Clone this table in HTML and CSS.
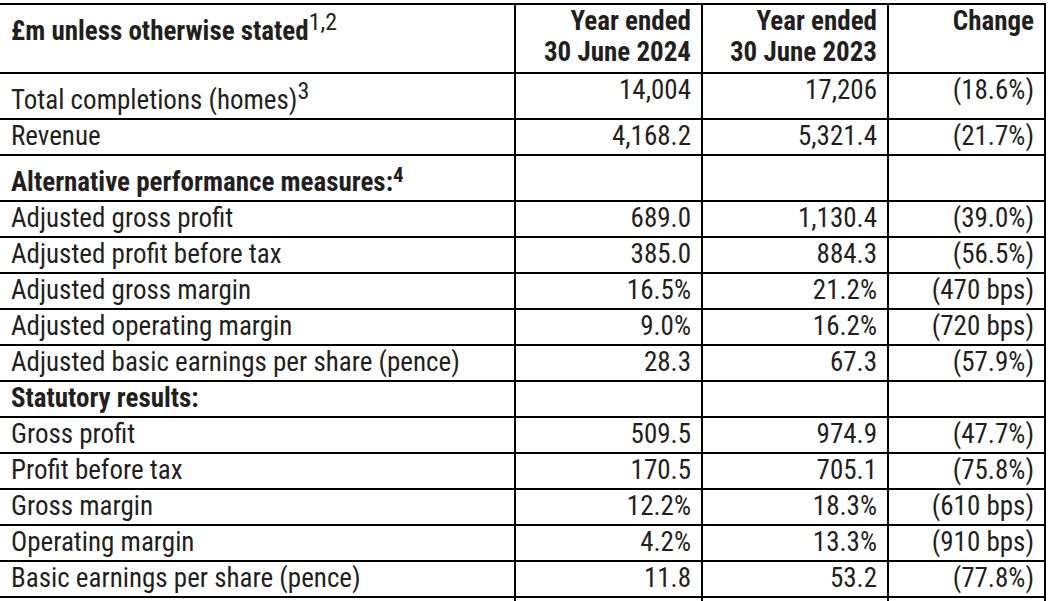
FILE: index.html
```html
<!DOCTYPE html>
<html lang="en">
<head>
<meta charset="utf-8">
<title>Results summary</title>
<link rel="stylesheet" href="styles.css">
</head>
<body>
<table class="results">
  <colgroup>
    <col class="c-label">
    <col class="c-cur">
    <col class="c-prev">
    <col class="c-chg">
  </colgroup>
  <thead>
    <tr class="head">
      <th class="label">£m unless otherwise stated<sup class="note">1,2</sup></th>
      <th>Year ended<br>30 June 2024</th>
      <th>Year ended<br>30 June 2023</th>
      <th>Change</th>
    </tr>
  </thead>
  <tbody>
    <tr><td class="label">Total completions (homes)<sup class="note">3</sup></td><td>14,004</td><td>17,206</td><td>(18.6%)</td></tr>
    <tr><td class="label">Revenue</td><td>4,168.2</td><td>5,321.4</td><td>(21.7%)</td></tr>
    <tr class="section"><td class="label">Alternative performance measures:<sup class="note note-small">4</sup></td><td></td><td></td><td></td></tr>
    <tr><td class="label">Adjusted gross profit</td><td>689.0</td><td>1,130.4</td><td>(39.0%)</td></tr>
    <tr><td class="label">Adjusted profit before tax</td><td>385.0</td><td>884.3</td><td>(56.5%)</td></tr>
    <tr><td class="label">Adjusted gross margin</td><td>16.5%</td><td>21.2%</td><td>(470 bps)</td></tr>
    <tr><td class="label">Adjusted operating margin</td><td>9.0%</td><td>16.2%</td><td>(720 bps)</td></tr>
    <tr><td class="label">Adjusted basic earnings per share (pence)</td><td>28.3</td><td>67.3</td><td>(57.9%)</td></tr>
    <tr class="section"><td class="label">Statutory results:</td><td></td><td></td><td></td></tr>
    <tr><td class="label">Gross profit</td><td>509.5</td><td>974.9</td><td>(47.7%)</td></tr>
    <tr><td class="label">Profit before tax</td><td>170.5</td><td>705.1</td><td>(75.8%)</td></tr>
    <tr><td class="label">Gross margin</td><td>12.2%</td><td>18.3%</td><td>(610 bps)</td></tr>
    <tr><td class="label">Operating margin</td><td>4.2%</td><td>13.3%</td><td>(910 bps)</td></tr>
    <tr><td class="label">Basic earnings per share (pence)</td><td>11.8</td><td>53.2</td><td>(77.8%)</td></tr>
    <tr class="more"><td class="label"></td><td></td><td></td><td></td></tr>
  </tbody>
</table>
</body>
</html>
```

FILE: styles.css
```css
html, body {
  margin: 0;
  padding: 0;
  height: 601px;
  overflow: hidden;
  background: #ffffff;
}

body {
  font-family: Roboto, "Liberation Sans", sans-serif;
  font-stretch: 80%;
  font-size: 27px;
  line-height: 31px;
  color: #231f20;
}

.results {
  border-collapse: separate;
  border-spacing: 0;
  table-layout: fixed;
  width: 1049px;
  margin: 3px 0 0 -3px;
  border-top: 2px solid #000;
  border-left: 2px solid #000;
}

.c-label { width: 517px; }
.c-cur { width: 187px; }
.c-prev { width: 186px; }
.c-chg { width: 157px; }

.results th,
.results td {
  padding: 1px 10px 2px 12px;
  border-right: 2px solid #000;
  border-bottom: 2px solid #000;
  vertical-align: top;
  text-align: right;
  font-weight: 400;
  white-space: nowrap;
}

.results th {
  font-weight: 700;
  padding-bottom: 4px;
}

.results .label {
  text-align: left;
}

.results .section .label {
  font-weight: 700;
}

.note {
  font-size: 24px;
  line-height: 32px;
  vertical-align: 10px;
  font-weight: 400;
}

.note-small {
  font-size: 21px;
  line-height: 36px;
  vertical-align: 9px;
  font-weight: 700;
}
```
